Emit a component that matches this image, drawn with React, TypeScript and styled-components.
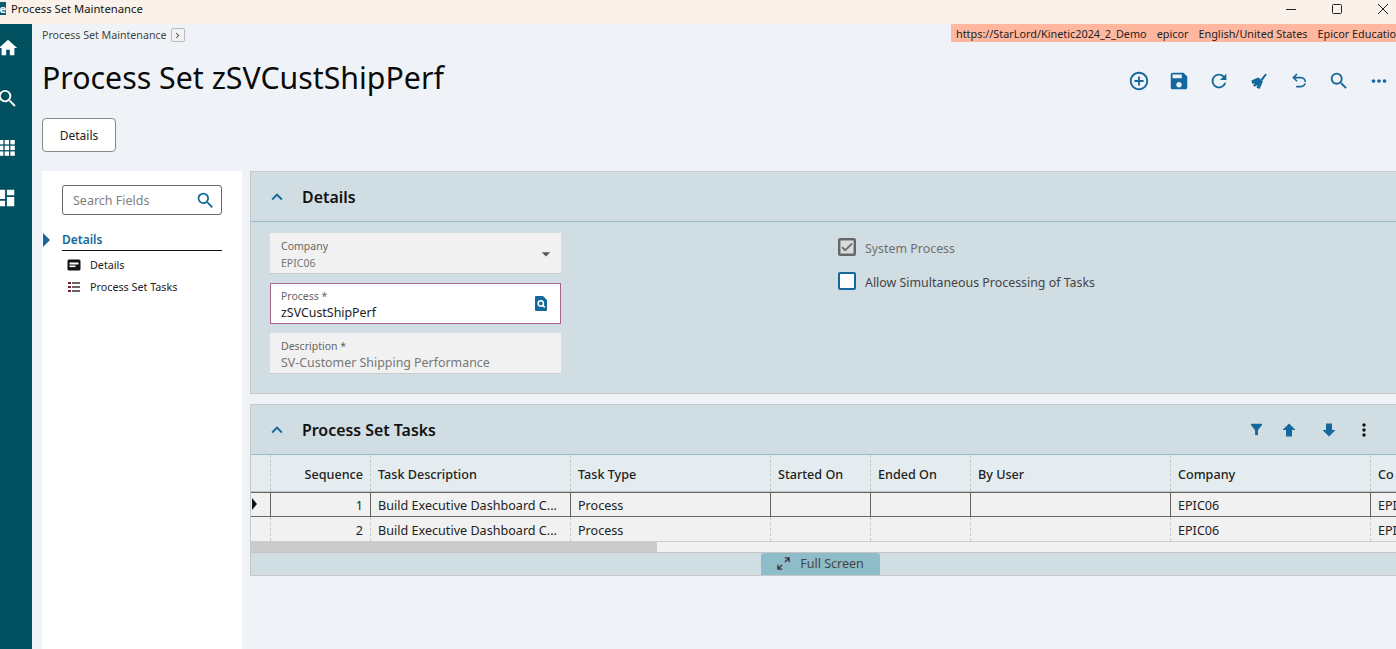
import React from "react";
import styled, {createGlobalStyle} from "styled-components";
import {
  MdHome,
  MdSearch,
  MdDashboard,
  MdAddCircleOutline,
  MdSave,
  MdRefresh,
  MdMoreHoriz,
  MdKeyboardArrowUp,
  MdMoreVert,
  MdFilterAlt,
  MdArrowDropDown,
  MdCheck,
  MdChevronRight,
} from "react-icons/md";

const BLUE = "#15689b";

const GlobalStyle = createGlobalStyle`
  html, body {
    margin: 0;
    padding: 0;
    height: 100%;
    overflow: hidden;
    background: #eff3f7;
  }
  body, input {
    font-family: "Noto Sans", "Open Sans", sans-serif;
  }
`;

const Page = styled.div`
  width: 1396px;
  height: 649px;
  display: flex;
  flex-direction: column;
  overflow: hidden;
`;

const TitleBar = styled.div`
  height: 24px;
  flex: none;
  display: flex;
  align-items: center;
  box-sizing: border-box;
  padding-bottom: 7px;
  background: #faf1ea;
  font-size: 11.25px;
  color: #111;
`;

const AppLogo = styled.div`
  width: 6px;
  height: 13px;
  margin-right: 5px;
  background: #0d5a70;
  color: #fff;
  font-size: 11px;
  line-height: 13px;
  font-weight: 700;
  overflow: hidden;
  direction: rtl;
`;

const WindowButtons = styled.div`
  margin-left: auto;
  display: flex;
  align-items: center;
  gap: 36px;
  padding-right: 8px;
  color: #222;
  svg {
    display: block;
  }
`;

const Body = styled.div`
  flex: 1;
  display: flex;
  min-height: 0;
`;

const Rail = styled.nav`
  width: 32px;
  flex: none;
  background: #00505f;
  color: #fff;
  display: flex;
  flex-direction: column;
  gap: 28px;
  padding-top: 13px;
  overflow: hidden;
`;

const RailIcon = styled.div<{$shift: number}>`
  height: 22px;
  display: flex;
  align-items: center;
  margin-left: ${(p) => p.$shift}px;
  svg {
    display: block;
    flex: none;
  }
`;

const Main = styled.main`
  flex: 1;
  min-width: 0;
  display: flex;
  flex-direction: column;
`;

const TopRow = styled.div`
  height: 18px;
  flex: none;
  display: flex;
  justify-content: space-between;
  padding-left: 10px;
`;

const Crumbs = styled.div`
  display: flex;
  align-items: center;
  gap: 4px;
  font-size: 10.65px;
  color: #444;
  height: 22px;
`;

const CrumbArrow = styled.span`
  width: 14px;
  height: 14px;
  box-sizing: border-box;
  border: 1px solid #bbb;
  border-radius: 2px;
  background: #f2f2f2;
  color: #555;
  display: flex;
  align-items: center;
  justify-content: center;
`;

const EnvBar = styled.div`
  width: 445px;
  height: 18px;
  background: #ffb89f;
  display: flex;
  align-items: center;
  gap: 10px;
  padding-left: 5px;
  box-sizing: border-box;
  font-size: 10.85px;
  color: #222;
  white-space: nowrap;
  overflow: hidden;
`;

const HeadRow = styled.div`
  height: 76px;
  flex: none;
  display: flex;
  align-items: center;
  justify-content: space-between;
  padding: 0 6px 0 10px;
  box-sizing: border-box;
`;

const PageTitle = styled.h1`
  margin: 0 0 6px;
  font-size: 30.3px;
  font-weight: 400;
  color: #0b0b0b;
`;

const Toolbar = styled.div`
  display: flex;
  align-items: center;
  gap: 18px;
  color: ${BLUE};
  padding-top: 2px;
  svg {
    display: block;
  }
`;

const TabRow = styled.div`
  height: 53px;
  flex: none;
  padding-left: 10px;
`;

const TabButton = styled.button`
  width: 74px;
  height: 34px;
  background: #fff;
  border: 1px solid #888;
  border-radius: 4px;
  font-family: inherit;
  font-size: 12px;
  color: #222;
  padding: 0;
`;

const Content = styled.div`
  flex: 1;
  display: flex;
  min-height: 0;
  padding-left: 10px;
  gap: 8px;
`;

const SideNav = styled.aside`
  width: 200px;
  flex: none;
  background: #fff;
  padding: 14px 20px;
  box-sizing: border-box;
`;

const SearchBox = styled.div`
  height: 30px;
  border: 1px solid #666;
  border-radius: 3px;
  display: flex;
  align-items: center;
  justify-content: space-between;
  padding: 0 5px 0 10px;
  font-size: 12.5px;
  box-sizing: border-box;
  color: #808080;
  svg {
    color: ${BLUE};
  }
`;

const NavHeading = styled.div`
  margin: 16px 0 3px;
  height: 19px;
  border-bottom: 1px solid #111;
  position: relative;
  font-size: 12px;
  font-weight: 600;
  color: ${BLUE};
  line-height: 18px;
`;

const NavCaret = styled.span`
  position: absolute;
  left: -19px;
  top: 2px;
  width: 0;
  height: 0;
  border-left: 7px solid ${BLUE};
  border-top: 7px solid transparent;
  border-bottom: 7px solid transparent;
`;

const NavItem = styled.div`
  height: 22px;
  display: flex;
  align-items: center;
  gap: 9px;
  padding-left: 5px;
  font-size: 10.75px;
  color: #222;
`;

const Panels = styled.div`
  flex: 1;
  min-width: 0;
  display: flex;
  flex-direction: column;
  gap: 10px;
`;

const Panel = styled.section<{$height: number}>`
  height: ${(p) => p.$height}px;
  flex: none;
  background: #d0dde2;
  border: 1px solid #c8c8c8;
  border-right: none;
  box-sizing: border-box;
  display: flex;
  flex-direction: column;
  overflow: hidden;
`;

const PanelHead = styled.div`
  height: 50px;
  flex: none;
  display: flex;
  align-items: center;
  border-bottom: 1px solid #97bcc9;
  padding: 0 17px 0 15px;
  box-sizing: border-box;
  color: ${BLUE};
`;

const PanelTitle = styled.h2`
  margin: 0 0 0 14px;
  font-size: 15.9px;
  font-weight: 600;
  color: #111;
`;

const PanelActions = styled.div`
  margin-left: auto;
  display: flex;
  align-items: center;
`;

const ActionSlot = styled.span<{$width: number}>`
  width: ${(p) => p.$width}px;
  display: flex;
  justify-content: center;
  svg {
    display: block;
  }
`;

const DetailsBody = styled.div`
  display: flex;
  padding: 11px 20px 0 19px;
`;

const FieldColumn = styled.div`
  width: 291px;
  flex: none;
  display: flex;
  flex-direction: column;
  gap: 9px;
`;

const Field = styled.div<{$active?: boolean}>`
  height: 41px;
  box-sizing: border-box;
  position: relative;
  background: ${(p) => (p.$active ? "#fff" : "#f1f1f1")};
  border: ${(p) => (p.$active ? "1px solid #a9628f" : "none")};
  border-bottom: ${(p) => (p.$active ? "1px solid #a9628f" : "1px solid #ccc")};
  padding: ${(p) => (p.$active ? "4px 10px 0" : "5px 11px 0")};
`;

const FieldLabel = styled.div`
  font-size: 10.5px;
  line-height: 16px;
  color: #666;
`;

const FieldValue = styled.div<{$dark?: boolean; $small?: boolean}>`
  font-size: ${(p) => (p.$small ? "10.5px" : "12.4px")};
  line-height: 17px;
  padding-top: ${(p) => (p.$small ? "1px" : "0")};
  color: ${(p) => (p.$dark ? "#222" : "#777")};
`;

const FieldIcon = styled.span<{$right: number; $top: number}>`
  position: absolute;
  right: ${(p) => p.$right}px;
  top: ${(p) => p.$top}px;
  display: flex;
  svg {
    display: block;
  }
`;

const CheckColumn = styled.div`
  margin-left: 277px;
  padding-top: 6px;
  display: flex;
  flex-direction: column;
  gap: 16px;
`;

const CheckRow = styled.label<{$muted?: boolean}>`
  display: flex;
  align-items: center;
  gap: 9px;
  height: 18px;
  font-size: 12.4px;
  color: ${(p) => (p.$muted ? "#707070" : "#444")};
`;

const CheckBox = styled.span<{$on?: boolean}>`
  width: 18px;
  height: 18px;
  margin-top: -2px;
  box-sizing: border-box;
  border-radius: 2px;
  border: 2px solid ${(p) => (p.$on ? "#666" : BLUE)};
  background: ${(p) => (p.$on ? "#d6dcde" : "#fff")};
  color: #666;
  display: flex;
  align-items: center;
  justify-content: center;
  svg {
    stroke: currentColor;
    stroke-width: 1.5;
  }
`;

const GridWrap = styled.div`
  flex: 1;
  min-height: 0;
  overflow: hidden;
`;

const GridRow = styled.div<{$head?: boolean; $current?: boolean}>`
  display: grid;
  grid-template-columns: 20px 100px 200px 200px 100px 100px 200px 200px 40px;
  width: 1200px;
  box-sizing: border-box;
  height: ${(p) => (p.$head ? "37px" : p.$current ? "25px" : "24px")};
  background: ${(p) => (p.$head ? "#e4ecef" : "#f1f1f1")};
  border-bottom: ${(p) =>
    p.$head ? "1px solid #c4c4c4" : p.$current ? "1px solid #666" : "none"};
  border-top: ${(p) => (p.$current ? "1px solid #666" : "none")};
  font-size: 12.6px;
  font-weight: ${(p) => (p.$head ? 500 : 400)};
  color: #222;
`;

const Cell = styled.div<{$right?: boolean; $solid?: boolean}>`
  border-right: 1px ${(p) => (p.$solid ? "solid #666" : "dashed #c8c8c8")};
  padding: 2px 7px 0;
  display: flex;
  align-items: center;
  justify-content: ${(p) => (p.$right ? "flex-end" : "flex-start")};
  overflow: hidden;
  white-space: nowrap;
  position: relative;
`;

const RowMarker = styled.span`
  position: absolute;
  left: 1px;
  top: 5px;
  width: 0;
  height: 0;
  border-left: 5px solid #111;
  border-top: 6px solid transparent;
  border-bottom: 6px solid transparent;
`;

const ScrollTrack = styled.div`
  height: 12px;
  background: #f1f1f1;
  border-top: 1px solid #ccc;
  border-bottom: 1px solid #c4c4c4;
  box-sizing: border-box;
`;

const ScrollThumb = styled.div`
  width: 406px;
  height: 100%;
  background: #cbcbcb;
`;

const PanelFoot = styled.div`
  height: 22px;
  flex: none;
  display: flex;
  justify-content: center;
  padding-right: 6px;
`;

const FullScreen = styled.div`
  width: 119px;
  height: 22px;
  box-sizing: border-box;
  padding-bottom: 2px;
  background: #8fbcc9;
  border-radius: 3px 3px 0 0;
  display: flex;
  align-items: center;
  justify-content: center;
  gap: 10px;
  font-size: 12.5px;
  color: #444;
`;

const MinimizeIcon = () => (
  <svg viewBox="0 0 10 10" width="10" height="10" stroke="currentColor" fill="none">
    <path d="M0 5.5h10" />
  </svg>
);

const MaximizeIcon = () => (
  <svg viewBox="0 0 10 10" width="10" height="10" stroke="currentColor" fill="none">
    <rect x="0.5" y="0.5" width="9" height="9" rx="1" />
  </svg>
);

const CloseIcon = () => (
  <svg viewBox="0 0 10 10" width="10" height="10" stroke="currentColor" fill="none">
    <path d="M0 0l10 10M10 0L0 10" />
  </svg>
);

const GridIcon = () => (
  <svg viewBox="0 -1 18 18" width="18" height="18" fill="currentColor">
    {[0, 5.7, 11.4].map((y) =>
      [0, 5.7, 11.4].map((x) => <rect key={`${x}-${y}`} x={x} y={y} width="4.4" height="4.4" />)
    )}
  </svg>
);

const BroomIcon = () => (
  <svg viewBox="0 0 22 22" width="22" height="22" fill="currentColor">
    <path d="M18.8 4.6 14.4 10.8l-1.8-1.4 4.8-5.8z" />
    <path d="M3.4 10.6 9.4 7.8l1-.2 4.4 3.6-.2 1-3 6.8-3.2-1.6 1.2-2.6-2.8 2-1.8-1.2 1.8-2.4-2.4.8z" />
  </svg>
);

const UndoIcon = () => (
  <svg
    viewBox="0 0 22 22"
    width="22"
    height="22"
    fill="none"
    stroke="currentColor"
    strokeWidth="1.6"
  >
    <path d="M9 4 5.4 7.6 9 11.2" />
    <path d="M5.6 7.6h7.2a4 4 0 0 1 0 9H8.2" strokeDasharray="14 1.4 20" />
  </svg>
);

const ProcessLookupIcon = () => (
  <svg viewBox="0 0 12 15" width="12" height="15">
    <path d="M1 0h7l4 4v10a1 1 0 0 1-1 1H1a1 1 0 0 1-1-1V1a1 1 0 0 1 1-1z" fill={BLUE} />
    <circle cx="5.8" cy="7.4" r="2.6" fill="none" stroke="#fff" strokeWidth="1.5" />
    <path d="m7.8 9.4 2 2" stroke="#fff" strokeWidth="1.5" />
  </svg>
);

const CardIcon = () => (
  <svg viewBox="0 0 14 12" width="14" height="12">
    <rect x="0.5" y="0.5" width="13" height="11" rx="1.5" fill="#111" />
    <rect x="2.5" y="3.5" width="9" height="2" fill="#fff" />
    <rect x="2.5" y="6.5" width="6" height="1.6" fill="#fff" />
  </svg>
);

const TaskListIcon = () => (
  <svg viewBox="0 0 14 12" width="14" height="12">
    {[1, 5, 9].map((y) => (
      <React.Fragment key={y}>
        <rect x="1" y={y} width="3" height="2" fill="#7a1f2a" />
        <rect x="5" y={y} width="8" height="2" fill="#666" />
      </React.Fragment>
    ))}
  </svg>
);

const ArrowUpIcon = () => (
  <svg viewBox="0 0 14 14" width="14" height="14" fill="currentColor">
    <path d="M7 .5 13.5 7H10v6.5H4V7H.5z" />
  </svg>
);

const ArrowDownIcon = () => (
  <svg viewBox="0 0 14 14" width="14" height="14" fill="currentColor">
    <path d="M7 13.5.5 7H4V.5h6V7h3.5z" />
  </svg>
);

const ExpandIcon = () => (
  <svg viewBox="0 0 14 14" width="13" height="13" fill="none" stroke="#3a3030" strokeWidth="1.4">
    <path d="M8.4 1h4.6v4.6M13 1 8.6 5.4" />
    <path d="M1 8.4V13h4.6M1 13l4.4-4.4" />
  </svg>
);

const columns = [
  "Task Description",
  "Task Type",
  "Started On",
  "Ended On",
  "By User",
  "Company",
  "Co",
];

const rows = [1, 2];

const App: React.FC = () => {
  return (
    <Page>
      <GlobalStyle />
      <TitleBar>
        <AppLogo>e</AppLogo>
        Process Set Maintenance
        <WindowButtons>
          <MinimizeIcon />
          <MaximizeIcon />
          <CloseIcon />
        </WindowButtons>
      </TitleBar>
      <Body>
        <Rail>
          <RailIcon $shift={-3}>
            <MdHome size={22} />
          </RailIcon>
          <RailIcon $shift={-4}>
            <MdSearch size={23} />
          </RailIcon>
          <RailIcon $shift={-1}>
            <GridIcon />
          </RailIcon>
          <RailIcon $shift={-5}>
            <MdDashboard size={22} />
          </RailIcon>
        </Rail>
        <Main>
          <TopRow>
            <Crumbs>
              Process Set Maintenance
              <CrumbArrow>
                <MdChevronRight size={11} />
              </CrumbArrow>
            </Crumbs>
            <EnvBar>
              <span>https://StarLord/Kinetic2024_2_Demo</span>
              <span>epicor</span>
              <span>English/United States</span>
              <span>Epicor Education</span>
            </EnvBar>
          </TopRow>
          <HeadRow>
            <PageTitle>Process Set zSVCustShipPerf</PageTitle>
            <Toolbar>
              <MdAddCircleOutline size={22} />
              <MdSave size={22} />
              <MdRefresh size={22} />
              <BroomIcon />
              <UndoIcon />
              <MdSearch size={22} />
              <MdMoreHoriz size={22} />
            </Toolbar>
          </HeadRow>
          <TabRow>
            <TabButton>Details</TabButton>
          </TabRow>
          <Content>
            <SideNav>
              <SearchBox>
                Search Fields
                <MdSearch size={21} />
              </SearchBox>
              <NavHeading>
                <NavCaret />
                Details
              </NavHeading>
              <NavItem>
                <CardIcon />
                Details
              </NavItem>
              <NavItem>
                <TaskListIcon />
                Process Set Tasks
              </NavItem>
            </SideNav>
            <Panels>
              <Panel $height={223}>
                <PanelHead>
                  <MdKeyboardArrowUp size={22} />
                  <PanelTitle>Details</PanelTitle>
                </PanelHead>
                <DetailsBody>
                  <FieldColumn>
                    <Field>
                      <FieldLabel>Company</FieldLabel>
                      <FieldValue $small>EPIC06</FieldValue>
                      <FieldIcon $right={5} $top={11}>
                        <MdArrowDropDown size={20} color="#555" />
                      </FieldIcon>
                    </Field>
                    <Field $active>
                      <FieldLabel>Process *</FieldLabel>
                      <FieldValue $dark>zSVCustShipPerf</FieldValue>
                      <FieldIcon $right={13} $top={12}>
                        <ProcessLookupIcon />
                      </FieldIcon>
                    </Field>
                    <Field>
                      <FieldLabel>Description *</FieldLabel>
                      <FieldValue>SV-Customer Shipping Performance</FieldValue>
                    </Field>
                  </FieldColumn>
                  <CheckColumn>
                    <CheckRow $muted>
                      <CheckBox $on>
                        <MdCheck size={14} />
                      </CheckBox>
                      System Process
                    </CheckRow>
                    <CheckRow>
                      <CheckBox />
                      Allow Simultaneous Processing of Tasks
                    </CheckRow>
                  </CheckColumn>
                </DetailsBody>
              </Panel>
              <Panel $height={172}>
                <PanelHead>
                  <MdKeyboardArrowUp size={22} />
                  <PanelTitle>Process Set Tasks</PanelTitle>
                  <PanelActions>
                    <ActionSlot $width={26}>
                      <MdFilterAlt size={17} />
                    </ActionSlot>
                    <ActionSlot $width={40}>
                      <ArrowUpIcon />
                    </ActionSlot>
                    <ActionSlot $width={40}>
                      <ArrowDownIcon />
                    </ActionSlot>
                    <ActionSlot $width={30}>
                      <MdMoreVert size={20} color="#111" />
                    </ActionSlot>
                  </PanelActions>
                </PanelHead>
                <GridWrap>
                  <GridRow $head>
                    <Cell />
                    <Cell $right>Sequence</Cell>
                    {columns.map((c) => (
                      <Cell key={c}>{c}</Cell>
                    ))}
                  </GridRow>
                  {rows.map((n) => {
                    const current = n === 1;
                    return (
                      <GridRow key={n} $current={current}>
                        <Cell $solid={current}>{current && <RowMarker />}</Cell>
                        <Cell $right $solid={current}>
                          {n}
                        </Cell>
                        <Cell $solid={current}>Build Executive Dashboard C...</Cell>
                        <Cell $solid={current}>Process</Cell>
                        <Cell $solid={current} />
                        <Cell $solid={current} />
                        <Cell $solid={current} />
                        <Cell $solid={current}>EPIC06</Cell>
                        <Cell>EPIC06</Cell>
                      </GridRow>
                    );
                  })}
                  <ScrollTrack>
                    <ScrollThumb />
                  </ScrollTrack>
                </GridWrap>
                <PanelFoot>
                  <FullScreen>
                    <ExpandIcon />
                    Full Screen
                  </FullScreen>
                </PanelFoot>
              </Panel>
            </Panels>
          </Content>
        </Main>
      </Body>
    </Page>
  );
};

export default App;
